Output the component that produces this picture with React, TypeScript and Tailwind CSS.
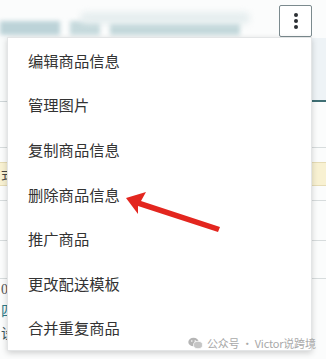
import React from "react";

const items = [
  "编辑商品信息",
  "管理图片",
  "复制商品信息",
  "删除商品信息",
  "推广商品",
  "更改配送模板",
  "合并重复商品",
];

export default function App() {
  return (
    <div
      className="relative w-[326px] h-[359px] overflow-hidden bg-[#fbfcfc]"
      style={{ fontFamily: '"Noto Sans CJK SC", "Noto Sans", sans-serif' }}
    >
      {/* underlying page */}
      <div className="flex flex-col">
        <div className="flex h-[38px] items-start">
          <div className="relative flex-1 h-[38px]">
            <div className="absolute left-0 top-[21px] h-[14px] w-[60px] bg-[#bcd3d8] blur-[2px]" />
            <div className="absolute left-[70px] top-[21px] h-[14px] w-[30px] bg-[#c6dadd] blur-[2px]" />
            <div className="absolute left-[110px] top-[22px] h-[13px] w-[130px] bg-[#c3d8db] blur-[2px]" />
            <div className="absolute left-[80px] top-[12px] h-[12px] w-[170px] rounded-full bg-[#e6eeef] blur-[3px]" />
          </div>
          <div className="mt-[5px] mr-[14px] flex h-[32px] w-[33px] flex-col items-center justify-center gap-[2px] rounded-[2px] border border-[#7b8a8e] bg-white">
            <span className="h-[4px] w-[4px] rounded-full bg-[#2b2f33]" />
            <span className="h-[4px] w-[4px] rounded-full bg-[#2b2f33]" />
            <span className="h-[4px] w-[4px] rounded-full bg-[#2b2f33]" />
          </div>
        </div>
        <div className="flex h-[64px]">
          <div className="flex-1 border-b border-[#cfd6d8] bg-[#f9fbfb]" />
          <div className="w-[14px] border-b-2 border-[#3f6f74] bg-[#eef3f6]" />
        </div>
        <div className="flex h-[46px] border-b border-[#d7dcdd]" />
        <div className="h-[14px]" />
        <div className="flex h-[24px] items-center bg-[#f8f1d2] border-y border-[#e6dcb5] pl-[1px] text-[13px] text-[#444]">
          <span>式</span>
        </div>
        <div className="h-[15px] border-b border-[#d7dcdd]" />
        <div className="h-[40px] border-b border-[#d7dcdd]" />
        <div className="h-[38px] border-b border-[#d7dcdd]" />
        <div className="flex flex-col pl-[1px] text-[14px] leading-[22px] text-[#555]" style={{ fontFamily: '"Liberation Serif", "Noto Sans CJK SC", serif' }}>
          <span>0</span>
          <span className="text-[#2f7c8a]">四</span>
          <span className="text-[#3b5560]">设</span>
        </div>
      </div>

      {/* menu */}
      <div className="absolute left-[7px] top-[37px] w-[305px] h-[314px] bg-white border border-[#e3e5e6] shadow-[0_2px_6px_rgba(0,0,0,0.18)] flex flex-col">
        {items.map((t) => (
          <div key={t} className="h-[45px] flex items-center pl-[20px] text-[15.3px] text-[#333]">
            {t}
          </div>
        ))}
      </div>

      {/* watermark */}
      <div className="absolute left-[188px] top-[336px] flex items-center gap-[4px] whitespace-nowrap text-[11px] leading-[14px] tracking-[-0.2px] text-[#a9a9a9]">
        <svg width="15" height="13" viewBox="0 0 15 13">
          <ellipse cx="5.5" cy="5" rx="5.2" ry="4.3" fill="#b5b5b5" />
          <ellipse cx="10" cy="8" rx="4.5" ry="3.7" fill="#c5c5c5" stroke="#fbfcfc" strokeWidth="0.8" />
          <circle cx="3.8" cy="4" r="0.8" fill="#fff" />
          <circle cx="7.2" cy="4" r="0.8" fill="#fff" />
        </svg>
        <span>公众号 · Victor说跨境</span>
      </div>

      {/* red arrow */}
      <svg className="absolute left-0 top-0" width="326" height="359" viewBox="0 0 326 359">
        <polygon
          points="126,198 146,192 141,201 220,227 218,232 138,206 138,214"
          fill="#e3261f"
        />
      </svg>
    </div>
  );
}
